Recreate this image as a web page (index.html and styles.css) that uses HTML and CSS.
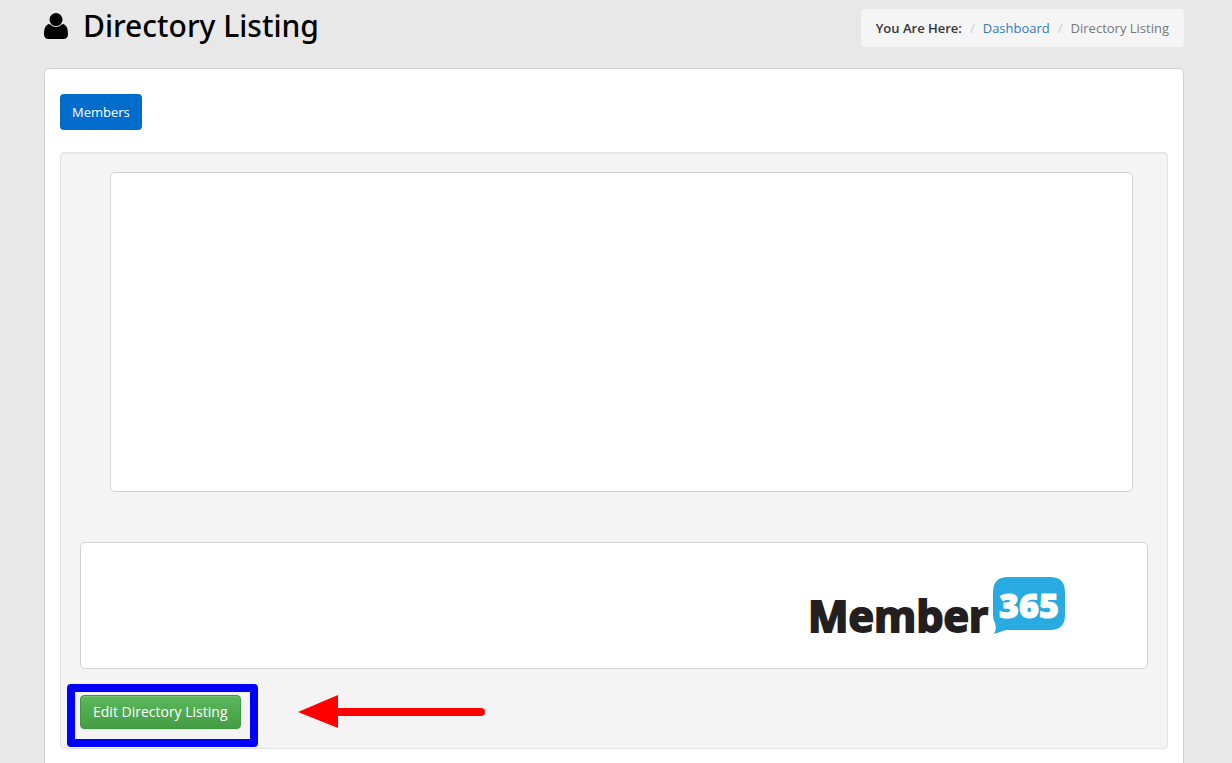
FILE: index.html
```
<!DOCTYPE html>
<html lang="en">
<head>
  <meta charset="UTF-8">
  <meta name="viewport" content="width=device-width, initial-scale=1">
  <title>Directory Listing</title>
  <link rel="stylesheet" href="styles.css">
</head>
<body>
  <div class="container">
    <header class="page-header">
      <h1 class="page-title">
        <svg class="icon-user" viewBox="0 0 24 26" aria-hidden="true">
          <circle cx="12" cy="6.6" r="6.5"/>
          <path d="M5.6 11C1.6 11.4 0 15.6 0 21C0 24.2 1.8 26 4.6 26H19.4C22.2 26 24 24.2 24 21C24 15.6 22.4 11.4 18.4 11C16.7 13 14.5 13.9 12 13.9S7.3 13 5.6 11Z"/>
        </svg>
        Directory Listing
      </h1>
      <nav aria-label="Breadcrumb">
        <ol class="breadcrumb">
          <li class="label">You Are Here:</li>
          <li><a href="#">Dashboard</a></li>
          <li class="active">Directory Listing</li>
        </ol>
      </nav>
    </header>

    <main class="panel">
      <button type="button" class="btn btn-primary">Members</button>

      <div class="well">
        <div class="box box-listing"></div>

        <div class="box box-logo">
          <svg class="logo" viewBox="0 0 256 60" role="img" aria-label="Member365">
            <text class="logo-name" x="-2" y="56">Member</text>
            <path class="logo-bubble" d="M198 1H240Q255 1 255 16V39Q255 54 240 54H196Q190 56 184 58Q187 53 185 47Q183 44 183 39V16Q183 1 198 1Z"/>
            <text class="logo-number" x="219" y="42" text-anchor="middle">365</text>
          </svg>
        </div>

        <div class="actions">
          <div class="highlight">
            <button type="button" class="btn btn-success">Edit Directory Listing</button>
          </div>
          <svg class="arrow" viewBox="0 0 187 34" aria-hidden="true">
            <path d="M0 17L40 0V13H183A4 4 0 0 1 183 21H40V33Z"/>
          </svg>
        </div>
      </div>
    </main>
  </div>
</body>
</html>
```
FILE: styles.css
```
* {
  box-sizing: border-box;
}
body {
  margin: 0;
  background: #e8e8e8;
  color: #333;
  font-family: "Open Sans", "Noto Sans", sans-serif;
  font-size: 13px;
  line-height: 20px;
}
.container {
  padding: 0 48px 0 44px;
}

/* header */
.page-header {
  display: flex;
  align-items: flex-start;
  justify-content: space-between;
  height: 68px;
}
.page-title {
  display: flex;
  align-items: center;
  gap: 15px;
  margin: 6px 0 0;
  color: #000;
  font-family: "Noto Sans", "Open Sans", sans-serif;
  font-size: 30px;
  font-weight: 500;
  line-height: 40px;
}
.icon-user {
  width: 24px;
  height: 26px;
}
.breadcrumb {
  display: flex;
  margin: 9px 0 0;
  padding: 9px 15px;
  border-radius: 4px;
  background: #f5f5f5;
  list-style: none;
}
.breadcrumb li + li::before {
  content: "/";
  padding: 0 8px;
  color: #ccc;
}
.breadcrumb a {
  color: #337ab7;
  text-decoration: none;
}
.breadcrumb .label {
  font-weight: 600;
}
.breadcrumb .active {
  color: #777;
}

/* panels */
.panel {
  min-height: calc(100vh - 68px);
  padding: 25px 15px 20px;
  border: 1px solid #d2d2d2;
  border-bottom: 0;
  border-radius: 5px 5px 0 0;
  background: #fff;
}
.well {
  margin-top: 22px;
  padding: 19px;
  border: 1px solid #e3e3e3;
  border-radius: 4px;
  background: #f4f4f4;
  box-shadow: inset 0 1px 1px rgba(0, 0, 0, 0.05);
}
.box {
  border: 1px solid #d2d2d2;
  border-radius: 5px;
  background: #fff;
}
.box-listing {
  min-height: 320px;
  margin: 0 15px 50px 30px;
}
.box-logo {
  display: flex;
  justify-content: flex-end;
  padding: 33px 81px 32px;
}
.logo {
  width: 256px;
  height: 60px;
  overflow: visible;
}
.logo-name {
  fill: #231f20;
  stroke: #231f20;
  stroke-width: 2px;
  font-size: 43px;
  font-weight: 700;
}
.logo-bubble {
  fill: #29abe2;
}
.logo-number {
  fill: #fff;
  stroke: #fff;
  stroke-width: 1px;
  font-size: 34px;
  font-weight: 800;
}

/* buttons */
.btn {
  display: block;
  padding: 7px 12px;
  border: 1px solid transparent;
  border-radius: 4px;
  color: #fff;
  font-family: inherit;
  font-size: 13px;
  line-height: 20px;
  cursor: pointer;
}
.btn-primary {
  padding: 8px 12px;
  border: 0;
  background: #006dcc;
}
.btn-success {
  padding: 6px 12px;
  border-color: #419641;
  background: linear-gradient(#5cb85c, #449d44);
  box-shadow: inset 0 1px 0 rgba(255, 255, 255, 0.15), 0 1px 1px rgba(0, 0, 0, 0.08);
  font-size: 14px;
}
.actions {
  display: flex;
  align-items: center;
  gap: 57px;
  margin-top: 26px;
}
.highlight {
  position: relative;
}
.highlight::after {
  content: "";
  position: absolute;
  inset: -11px -17px -18px -13px;
  border: 8px solid #00f;
  border-radius: 4px;
  pointer-events: none;
}
.arrow {
  width: 187px;
  height: 34px;
  fill: #f00;
}
```
